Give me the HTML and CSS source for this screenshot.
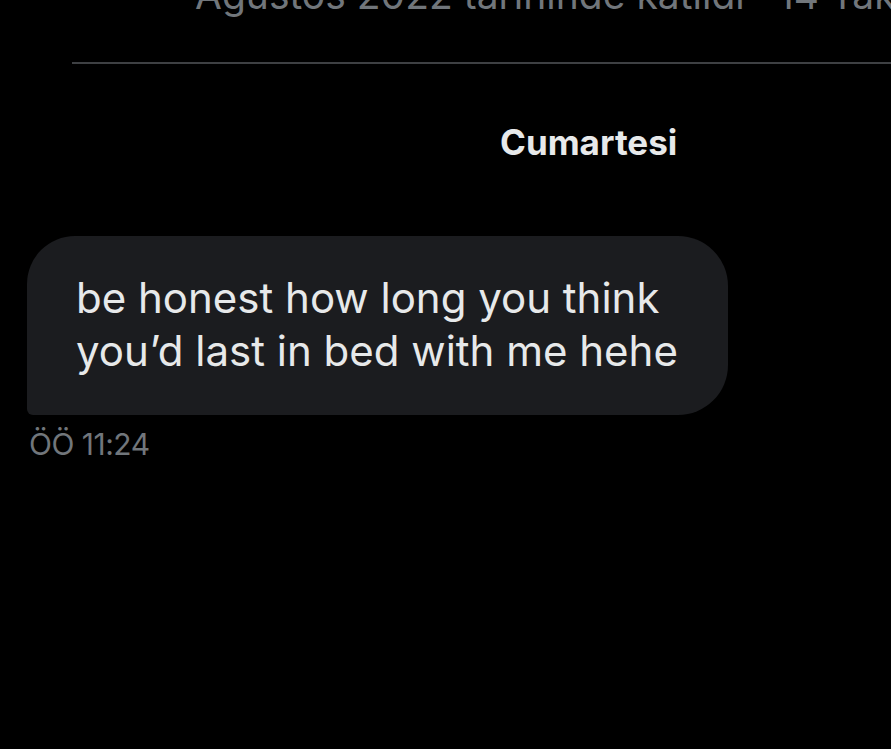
FILE: index.html
```html
<!DOCTYPE html>
<html lang="tr">
<head>
<meta charset="utf-8">
<link rel="stylesheet" href="styles.css">
</head>
<body>
<div class="screen">
  <div class="profile-meta">Ağustos 2022 tarihinde katıldı · 14 Takip edilen</div>
  <div class="divider"></div>
  <div class="day">Cumartesi</div>
  <div class="message">
    <div class="bubble">
      <p class="bubble-text">be honest how long you think you’d last in bed with me hehe</p>
    </div>
    <div class="time">ÖÖ 11:24</div>
  </div>
</div>
</body>
</html>
```
FILE: styles.css
```css
html, body {
  margin: 0;
  padding: 0;
  background: #000;
}
.screen {
  width: 891px;
  height: 749px;
  overflow: hidden;
  background: #000;
  font-family: Inter, "Noto Sans", sans-serif;
}
.profile-meta {
  margin-top: -28px;
  padding-left: 195px;
  font-size: 39px;
  line-height: 46px;
  color: #71767b;
  white-space: nowrap;
  overflow: hidden;
}
.divider {
  margin-top: 44px;
  margin-left: 72px;
  height: 2px;
  background: #3e4043;
}
.day {
  margin-top: 58px;
  padding-left: 500px;
  font-size: 35px;
  line-height: 40px;
  font-weight: 700;
  color: #e7e9ea;
}
.message {
  margin-top: 74px;
  padding-left: 27px;
}
.bubble {
  width: 701px;
  height: 179px;
  box-sizing: border-box;
  padding: 35px 30px 0 49px;
  background: #1b1c1f;
  border-radius: 48px 50px 50px 6px;
}
.bubble-text {
  margin: 0;
  font-size: 42px;
  line-height: 53px;
  color: #e7e9ea;
}
.time {
  margin-top: 12px;
  padding-left: 2px;
  font-size: 30px;
  line-height: 34px;
  letter-spacing: -0.5px;
  color: #71767b;
}
```
